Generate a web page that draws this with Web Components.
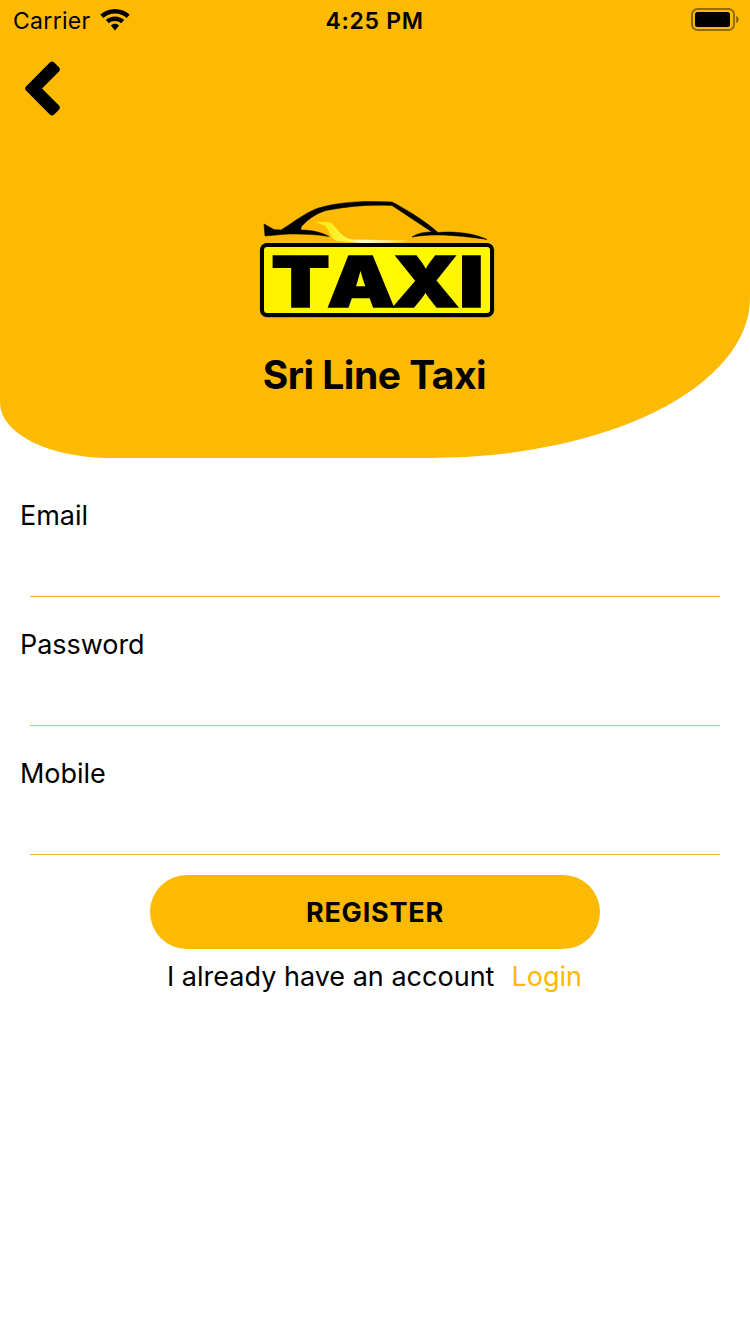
<!DOCTYPE html>
<html lang="en">
<head>
<meta charset="utf-8">
<title>Sri Line Taxi</title>
<style>
html,body{margin:0;background:#fff}
body{font-family:Inter,"Liberation Sans",sans-serif;color:#000;--brand:#fcba03}
</style>
</head>
<body>
<register-screen></register-screen>
<script>
const define = (name, html) => {
  const t = document.createElement('template');
  t.innerHTML = html;
  customElements.define(name, class extends HTMLElement {
    constructor() {
      super();
      this.attachShadow({mode: 'open'}).append(t.content.cloneNode(true));
    }
  });
};

define('status-bar', `<style>
:host{display:grid;grid-template-columns:1fr auto 1fr;align-items:center;height:40px;padding:0 11px 0 13px;font-size:23px;line-height:40px}
.left{display:flex;align-items:center;gap:9px;letter-spacing:.3px}
.left span,.time{padding-top:2px;line-height:38px}
.time{font-weight:600;letter-spacing:.7px;font-size:23px;margin-left:-3px}
.battery{justify-self:end}
svg{display:block}
</style>
<div class="left"><span>Carrier</span>
<svg width="30" height="22" viewBox="0 0 30 22"><path d="M15 0C9.300 0 4.100 2.200.300 5.800L3.400 8.900C6.500 6 10.500 4.400 15 4.400s8.500 1.600 11.600 4.500l3.100-3.100C25.900 2.200 20.700 0 15 0Z"/><path d="M15 7.500c-3.500 0-6.700 1.300-9.200 3.600l3.100 3.100c1.600-1.500 3.700-2.300 6.100-2.300s4.500.800 6.100 2.300l3.100-3.100C21.700 8.800 18.500 7.500 15 7.500Z"/><path d="M15 14.800c-1.600 0-3 .600-4.100 1.600L15 21.500l4.100-5.100c-1.100-1-2.500-1.600-4.100-1.600Z"/></svg></div>
<span class="time">4:25 PM</span>
<svg class="battery" width="48" height="24" viewBox="0 0 48 24"><rect x="1" y="1" width="42" height="21" rx="5.500" fill="none" stroke="#000" stroke-opacity=".42" stroke-width="2"/><rect x="4" y="4" width="35" height="15" rx="2.500"/><path d="M45.300 8v7c1.500-.500 2.200-2 2.200-3.500S46.800 8.500 45.300 8Z" fill-opacity=".5"/></svg>`);

define('back-button', `<style>
:host{display:block;padding:21px 0 0 24px}
svg{display:block}
</style><svg width="38" height="56" viewBox="0 0 38 56"><path d="M2 25.600 25.800 1.500Q28-.500 30.200 1.500L35 6.300Q36.700 8.400 35 10.400L18 27.500 35 44.600Q36.700 46.600 35 48.700L30.200 53.500Q28 55.500 25.800 53.500L2 29.400Q.300 27.500 2 25.600Z"/></svg>`);

define('taxi-logo', `<style>
:host{display:block}
svg{display:block;overflow:visible}
text{font-family:Inter,sans-serif;font-weight:900;font-size:70px;text-anchor:middle;stroke:#000;stroke-width:1.6px}
</style><svg width="255" height="135" viewBox="0 0 255 135">
<defs><linearGradient id="plate"><stop offset="0" stop-color="#fff000"/><stop offset=".5" stop-color="#fffb00"/><stop offset="1" stop-color="#fff500"/></linearGradient>
<linearGradient id="shine"><stop offset="0" stop-color="#ffe600"/><stop offset=".3" stop-color="#fff23a"/><stop offset=".52" stop-color="#fffbd0"/><stop offset="1" stop-color="#ffd84a"/></linearGradient></defs>
<path d="M64 31.500 81 32.500C86 37 92 48 102 49.500L160 50.500C147 53 130 53 111 53L87 51C80 48 79 40 75 36Z" fill="url(#shine)"/>
<path d="M14 34 24 39.500 31 40C44 32 55 23 67 18.500C88 12 112 10.500 142 12L147 14.500C160 22 175 31 188 42.500C203 41 224 43 237 49.500C224 47.500 204 45 187 45C180 45 171 45.500 162 47C169 42.500 176 42 182 42L142 15.500C120 14.500 99 16 76 20.500C65 24 57 30 51 37L51 40C61 40 71 42 79 46.500C63 44 45 43.500 32 44.500L15 46Z" stroke="#000" stroke-width=".5"/>
<rect x="11" y="54.500" width="232" height="72" rx="6" fill="none" stroke="#9b8868" stroke-width="3" stroke-opacity=".65"/>
<rect x="12" y="55" width="230" height="70" rx="5" fill="url(#plate)" stroke="#000" stroke-width="4"/>
<text transform="scale(1.22 1)" x="41.500 91 144 181.500" y="117">TAXI</text>
</svg>`);

define('hero-header', `<style>
:host{display:flex;flex-direction:column;height:458px;background:var(--brand);border-radius:0 0 320px 110px/0 0 160px 55px}
taxi-logo{align-self:center;margin:73px 0 0 5px}
h1{margin:26px 0 0;text-align:center;font-size:39px;line-height:48px;font-weight:700;letter-spacing:-.5px;padding-right:1px}
</style><status-bar></status-bar><back-button></back-button><taxi-logo></taxi-logo><h1><slot></slot></h1>`);

define('form-field', `<style>
:host{display:flex;flex-direction:column;height:129px}
label{padding:31px 0 0 20px;font-size:27px;line-height:34px;letter-spacing:-.05px}
.input{margin:auto 30px 0;height:64px;border-bottom:1px solid #efb62c;box-sizing:border-box}
</style><label><slot></slot></label><div class="input"></div>`);

define('primary-button', `<style>
:host{display:block}
button{display:block;width:450px;height:74px;padding:1px 0 0;margin:0 auto;border:0;border-radius:37px;background:var(--brand);color:#000;font:700 27px/73px Inter,sans-serif;letter-spacing:.8px}
</style><button><slot></slot></button>`);

define('login-prompt', `<style>
:host{display:flex;justify-content:center;gap:17px;font-size:27px;line-height:34px;letter-spacing:.01px;padding-right:1px}
.link{color:var(--brand)}
</style><span><slot></slot></span><span class="link"><slot name="link"></slot></span>`);

define('register-screen', `<style>
:host{display:block;width:750px;height:1334px;background:#fff;overflow:hidden}
form{display:flex;flex-direction:column;padding-top:10px}
.fields{display:flex;flex-direction:column}
primary-button{margin-top:20px}
login-prompt{margin-top:11px}
</style><hero-header>Sri Line Taxi</hero-header>
<form><div class="fields"><form-field>Email</form-field><form-field>Password</form-field><form-field>Mobile</form-field></div>
<primary-button>REGISTER</primary-button>
<login-prompt>I already have an account<span slot="link">Login</span></login-prompt></form>`);
</script>
</body>
</html>
